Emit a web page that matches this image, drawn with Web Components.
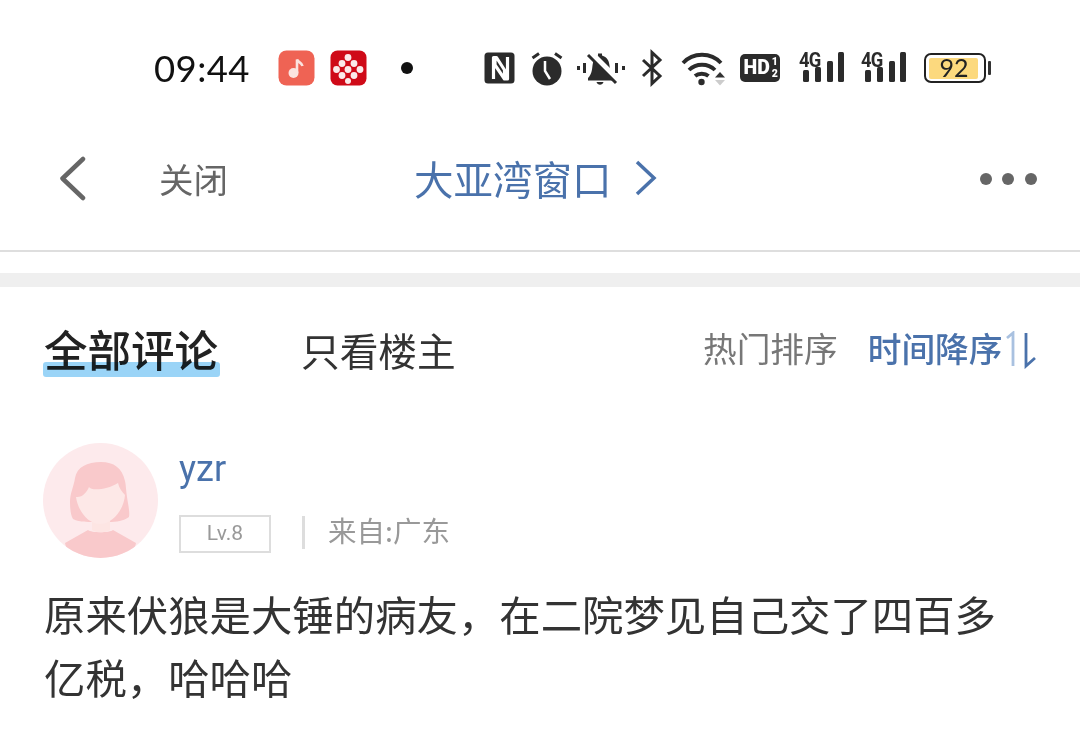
<!DOCTYPE html>
<html lang="zh"><head><meta charset="utf-8"><style>
html,body{margin:0;padding:0;background:#fff;}
body{width:1080px;height:751px;overflow:hidden;font-family:"Noto Sans CJK SC","Noto Sans",sans-serif;}
</style></head><body>
<status-bar></status-bar>
<nav-bar>大亚湾窗口</nav-bar>
<section-band></section-band>
<comment-tabs></comment-tabs>
<comment-item name="yzr" level="Lv.8" from="来自:广东">原来伏狼是大锤的病友，在二院梦见自己交了四百多亿税，哈哈哈</comment-item>
<script>
function def(name,html){customElements.define(name,class extends HTMLElement{constructor(){super();this.attachShadow({mode:'open'}).innerHTML=html;}});}
def('status-bar',`<style>
:host{display:flex;align-items:center;height:136px;padding-left:154px;box-sizing:border-box;color:#222}
.t{font:400 36.5px/1 Lato,sans-serif;color:#111;width:124px;letter-spacing:.4px}
svg{display:block;flex:none}
</style>
<span class="t">09:44</span>
<svg width="37" height="36" viewBox="0 0 37 36" style="margin-right:15px"><rect x=".5" y=".5" width="36" height="35" rx="8" fill="#ef6354"/><circle cx="15.500" cy="23" r="5" fill="#fbe3df"/><path d="M19 23V9.500c1 3 5 3 5.500 6.500" fill="none" stroke="#fbe3df" stroke-width="2.600"/></svg>
<svg width="37" height="36" viewBox="0 0 37 36" style="margin-right:33px"><rect x=".5" y=".5" width="36" height="35" rx="7" fill="#cf0a18"/><g fill="#fbeaea"><circle cx="18" cy="7.500" r="3.400"/><circle cx="12" cy="13.500" r="3.400"/><circle cx="24" cy="13.500" r="3.400"/><circle cx="6.500" cy="19.500" r="3.400"/><circle cx="18" cy="19.500" r="3.400"/><circle cx="30" cy="19.500" r="3.400"/><circle cx="12" cy="25.500" r="3.400"/><circle cx="24" cy="25.500" r="3.400"/><circle cx="18" cy="31" r="3"/></g></svg>
<svg width="14" height="14" viewBox="0 0 14 14" style="margin-right:70px"><circle cx="7" cy="7" r="6" fill="#111"/></svg>
<svg width="32" height="32" viewBox="0 0 32 32" style="margin-right:15px"><rect x=".5" y=".5" width="30" height="31" rx="3.500" fill="#2b2b2b"/><path d="M9.500 27V5.500h3L20.500 18v9M23.500 5v22h-3L11 13v-8" fill="none" stroke="#fff" stroke-width="3.200" stroke-linejoin="round"/></svg>
<svg width="32" height="36" viewBox="0 0 32 36" style="margin-right:14px"><circle cx="16" cy="21" r="14.500" fill="#2b2b2b"/><path d="M14 11v10l5 8" fill="none" stroke="#fff" stroke-width="2.500"/><path d="M1.500 8 8 3.500M30.500 8 24 3.500" stroke="#2b2b2b" stroke-width="3"/></svg>
<svg width="48" height="36" viewBox="0 0 48 36" style="margin-right:15px"><path d="M21 5.500V3.500h4v2c5 1.500 7 5 7.500 10 .5 5 1 9 5 12.500v2.500H11v-2.500c3.500-3.500 4-7.500 4.500-12.500.5-5 2.500-8.500 5.500-10z" fill="#2b2b2b"/><path d="M19.500 32c1 3.500 6 3.500 7 0z" fill="#2b2b2b"/><path d="M13 3 41 31" stroke="#fff" stroke-width="7"/><path d="M11 5 39 33" stroke="#2b2b2b" stroke-width="3"/><path d="M1.500 16v4M7.500 13v10M39.500 13v10M46.500 16v4" stroke="#2b2b2b" stroke-width="3"/></svg>
<svg width="24" height="38" viewBox="0 0 24 38" style="margin-right:17px"><path d="M3 11 20 27 12 34.500V3.500L20 11 3 27" fill="none" stroke="#2b2b2b" stroke-width="3"/></svg>
<svg width="46" height="36" viewBox="0 0 46 36" style="margin-right:13px"><path d="M2 13c10-11 28-11 38 0M8 20c7-7 19-7 26 0M14 26c3.500-3 10-3 13.500 0" fill="none" stroke="#2b2b2b" stroke-width="3.800"/><circle cx="20.500" cy="32" r="3.200" fill="#2b2b2b"/><path d="M34 27.500 39 22l5 5.500z" fill="#333"/><path d="M34 30 39 35.500 44 30z" fill="#ccc"/></svg>
<hd-mark></hd-mark>
<net-mark style="margin-left:19px"></net-mark>
<net-mark style="margin-left:16px"></net-mark>
<batt-mark style="margin-left:17px"></batt-mark>`);
def('hd-mark',`<style>:host{display:flex;align-items:center;width:40px;height:28px;background:#2b2b2b;border-radius:5px;color:#fff;box-sizing:border-box;padding-left:3.5px;font:900 19.5px/1 Roboto,sans-serif}
.f{display:flex;flex-direction:column;font-size:10.5px;line-height:12.5px;margin-left:2px;font-weight:900}</style><span>HD</span><span class="f"><span>1</span><span>2</span></span>`);
def('net-mark',`<style>:host{display:block;position:relative;width:46px;height:32px;margin-top:-2px}
b{position:absolute;left:0;top:-1px;font:700 20px/1 Roboto,sans-serif;color:#2b2b2b;letter-spacing:-1px;transform:scaleX(.92);transform-origin:left}
svg{position:absolute;left:0;top:0}</style><b>4G</b><svg width="46" height="32" viewBox="0 0 46 32"><g fill="#2b2b2b"><rect x="4" y="19" width="6" height="12" rx="1.500"/><rect x="16" y="16" width="6" height="15" rx="1.500"/><rect x="28" y="10" width="6" height="21" rx="1.500"/><rect x="39" y="1" width="6" height="30" rx="1.500"/></g></svg>`);
def('batt-mark',`<style>:host{display:flex;align-items:center;gap:2px}
.b{box-sizing:border-box;width:62px;height:30px;border:2.5px solid #222;border-radius:7px;padding:2.5px;position:relative}
.f{width:49px;height:100%;background:#fcd97e;border-radius:2px}
.n{position:absolute;left:0;right:0;top:0;bottom:0;font:400 25px/25px Lato,sans-serif;color:#222;text-align:center;padding-right:2px}
.c{width:3px;height:14px;background:#333;border-radius:1px}</style><div class="b"><div class="f"></div><div class="n">92</div></div><div class="c"></div>`);
def('nav-bar',`<style>
:host{display:flex;align-items:center;height:116px;padding:0 43.5px 32px 59px;box-sizing:border-box;border-bottom:2px solid #dedede}
.x{font-size:34.5px;color:#666;margin-left:73px;margin-top:2px;line-height:1}
.m{font-size:39.5px;color:#4a72ab;margin-left:186px;margin-top:2px;line-height:1;display:flex;align-items:center;gap:22.5px}
.d{margin-left:auto;display:flex;gap:10.5px;margin-top:4px}
.d i{width:12px;height:12px;border-radius:50%;background:#666}
svg{display:block}
</style>
<svg width="27" height="46" viewBox="0 0 27 46" style="margin-top:2px"><path d="M24 4 3.500 23.500 24 43" fill="none" stroke="#666" stroke-width="4.500" stroke-linecap="round" stroke-linejoin="round"/></svg>
<span class="x">关闭</span>
<span class="m"><slot></slot><svg width="24" height="36" viewBox="0 0 24 36"><path d="M3 2l17 16L3 34" fill="none" stroke="#4a72ab" stroke-width="3.500"/></svg></span>
<span class="d"><i></i><i></i><i></i></span>`);
def('section-band',`<style>:host{display:block;height:14px;margin-top:21px;background:#efefef}</style>`);
def('comment-tabs',`<style>
:host{display:flex;align-items:center;height:130px;padding:0 43px 6px 44px;box-sizing:border-box}
.a{position:relative;font-size:43.5px;font-weight:500;color:#222;line-height:1}
.a::before{content:"";position:absolute;left:-1px;right:-2px;bottom:-6.5px;height:15px;border-radius:3px;background:#8fd0f7;opacity:.9;mix-blend-mode:multiply}
.o{font-size:38.7px;color:#333;margin-left:83px;line-height:1}
.r{margin-left:auto;display:flex;align-items:center;font-size:33.7px;line-height:1;color:#777;margin-top:-2px}
.s{color:#4a72ab;margin-left:30px;font-weight:500}
svg{display:block;margin:3px 0 0 1.5px}
</style>
<span class="a">全部评论</span><span class="o">只看楼主</span>
<span class="r">热门排序<span class="s">时间降序</span><svg width="33" height="38" viewBox="0 0 33 38"><path d="M3 7 9 2v33" fill="none" stroke="#a9c1e0" stroke-width="2.800"/><path d="M22 2v33l9-8" fill="none" stroke="#4a72ab" stroke-width="2.800"/></svg></span>`);
customElements.define('comment-item',class extends HTMLElement{constructor(){super();const s=this.attachShadow({mode:'open'});const g=k=>this.getAttribute(k);
s.innerHTML=`<style>
:host{display:block;padding:26px 43px 0 43px}
.h{display:flex;gap:21px}
.i{display:flex;flex-direction:column}
.n{font:400 36px/52px Roboto,sans-serif;color:#4a72ab}
.l{display:flex;align-items:center;margin-top:20px}
.lv{box-sizing:border-box;width:92px;height:38px;border:2px solid #ddd;font:400 21px/33px Roboto,sans-serif;color:#999;text-align:center}
.sep{width:3px;height:33px;background:#ddd;margin:0 23px 4px 31px}
.f{font-size:28.5px;color:#999;line-height:1;margin-bottom:8px}
.c{font-size:41.4px;line-height:63px;color:#333;margin:24px 0 0 1px;width:965px}
svg{display:block;flex:none}
</style>
<div class="h"><svg width="115" height="115" viewBox="0 0 115 115"><defs><clipPath id="c"><circle cx="57.5" cy="57.5" r="57.5"/></clipPath></defs><circle cx="57.5" cy="57.5" r="57.5" fill="#fdeaec"/><g clip-path="url(#c)"><path d="M22 100 45 87c3 3 22 3 25 0l23 13-5 20H27z" fill="#f9c9cb"/><path d="M58 19c-14 0-24 5-26 16-1 8-5 15-5 24 0 8 1 14 3 17 5 3 15 3 20 3h16c7 0 15-1 20-5 1-5-1-13-2-20-1-6-1-12-2-16-3-13-11-19-24-19z" fill="#f9c9cb"/><path d="M49 78h18v9c-3 3-15 3-18 0z" fill="#fde5e3"/><path d="M46 44c2 4 18 3 29-4 1 5 4 9 7 12-1 14-12 29-25 29C45 81 35 68 33 54c6 1 11-5 13-10z" fill="#fde8e7"/></g></svg>
<div class="i"><span class="n">${g('name')}</span><div class="l"><span class="lv">${g('level')}</span><span class="sep"></span><span class="f">${g('from')}</span></div></div></div>
<div class="c"><slot></slot></div>`;}});
</script>
</body></html>
